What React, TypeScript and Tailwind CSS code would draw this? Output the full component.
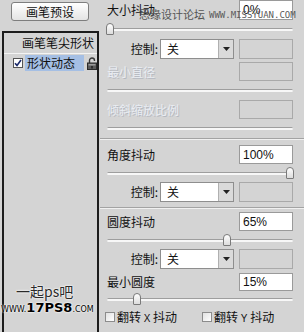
import type { ReactNode } from "react";

const cjk = "font-['Noto_Sans_CJK_SC','Noto_Sans',sans-serif]";

function ValueBox({ value, disabled }: { value?: string; disabled?: boolean }) {
  return (
    <div
      className={`flex h-full w-[54px] items-center border pl-[3px] font-['Liberation_Sans',Arial,sans-serif] text-[12px] text-[#111] ${
        disabled ? "border-[#a9a9a9] bg-[#d4d4d4]" : "border-[#9a9a9a] bg-white"
      }`}
    >
      {value}
    </div>
  );
}

function LabelRow({
  label,
  value,
  disabled,
  h,
}: {
  label: string;
  value?: string;
  disabled?: boolean;
  h: string;
}) {
  return (
    <div className={`flex ${h} items-stretch justify-between pr-[11px]`}>
      <span
        className={`flex items-center pl-[7px] text-[12px] ${
          disabled ? "text-[#e9edf3] [text-shadow:1px_1px_0_#b4b8c0]" : "text-[#111]"
        }`}
      >
        {label}
      </span>
      <ValueBox value={value} disabled={disabled} />
    </div>
  );
}

function Slider({ h, pos }: { h: string; pos?: number }) {
  return (
    <div className={`flex ${h} items-center pl-[7px] pr-[11px]`}>
      <div className="relative h-[3px] w-full rounded-[2px] border-t border-[#9e9e9e] bg-[#f7f7f7]">
        {pos !== undefined && (
          <div
            className="absolute top-[-6px] h-[12px] w-[8px] rounded-t-[4px] rounded-b-[1px] border border-[#7a7a7a] bg-gradient-to-b from-white to-[#dcdcdc]"
            style={{ left: `${-1 + pos * 180}px` }}
          />
        )}
      </div>
    </div>
  );
}

function Control() {
  return (
    <div className="flex h-[20px] items-stretch">
      <span className="flex w-[58px] items-center justify-end text-[12px] text-[#111]">控制:</span>
      <div className="ml-[2px] flex w-[74px] border border-[#8e8e8e] bg-white">
        <span className="flex flex-1 items-center pl-[6px] text-[12px] text-[#111]">关</span>
        <span className="flex w-[15px] items-center justify-center border-l border-[#b0b0b0] bg-[#dadada]">
          <svg width="7" height="4" viewBox="0 0 7 4">
            <path d="M0 0h7L3.5 4z" fill="#222" />
          </svg>
        </span>
      </div>
      <div className="ml-[5px]">
        <ValueBox disabled />
      </div>
    </div>
  );
}

function Separator() {
  return <div className="h-[2px] border-t border-b border-t-[#a3a3a3] border-b-[#f0f0f0]" />;
}

function Check({ children }: { children: ReactNode }) {
  return (
    <div className="flex items-center">
      <span className="h-[10px] w-[10px] border border-[#8c8c8c] bg-gradient-to-br from-[#e2e2e2] to-white" />
      <span className="ml-[2px] text-[12px] text-[#111]">{children}</span>
    </div>
  );
}

function Lock() {
  return (
    <svg width="10" height="13" viewBox="0 0 10 13">
      <path d="M2.5 6V3.5a2.5 2.5 0 0 1 5 0V4" fill="none" stroke="#3a3a3a" strokeWidth="1.4" />
      <rect x="0.5" y="6" width="9" height="6.5" fill="#5a5a5a" stroke="#2a2a2a" />
      <rect x="1.5" y="7" width="7" height="1.5" fill="#9a9a9a" />
      <rect x="4.3" y="9" width="1.4" height="2.5" fill="#1a1a1a" />
    </svg>
  );
}

export default function App() {
  return (
    <div className={`relative flex h-[332px] w-[304px] overflow-hidden bg-[#d4d4d4] ${cjk}`}>
      {/* left column */}
      <div className="flex w-[100px] flex-col">
        <button
          type="button"
          className="ml-[11px] mt-[2px] h-[19px] w-[78px] rounded-[3px] border border-[#7e7e7e] bg-gradient-to-b from-white to-[#e4e4e4] text-[12px] leading-none text-[#111]"
        >
          画笔预设
        </button>
        <div className="ml-[2px] mt-[10px] flex w-[97px] flex-1 flex-col border-2 border-b-0 border-[#1c1c1c]">
          <div className="flex h-[20px] items-center justify-end pr-[3px] text-[12px] text-[#111]">
            画笔笔尖形状
          </div>
          <div className="h-px bg-[#f4f4f4]" />
          <div className="mt-px flex h-[16px] items-center">
            <span className="ml-[9px] flex h-[10px] w-[10px] items-center justify-center border border-[#555] bg-white">
              <svg width="8" height="8" viewBox="0 0 8 8">
                <path d="M1 4.2l2 2.2L7 1" fill="none" stroke="#1b2a6b" strokeWidth="1.6" />
              </svg>
            </span>
            <span className="ml-[2px] flex h-full w-[59px] items-center bg-[#a5bfe4] pl-[2px] text-[12px] text-[#111]">
              形状动态
            </span>
            <span className="ml-[3px]">
              <Lock />
            </span>
          </div>
        </div>
      </div>

      {/* right column */}
      <div className="flex flex-1 flex-col">
        <LabelRow label="大小抖动" value="0%" h="h-[20px]" />
        <Slider h="h-[19px]" pos={0} />
        <Control />
        <div className="h-[3px]" />
        <LabelRow label="最小直径" disabled h="h-[19px]" />
        <Slider h="h-[19px]" />
        <LabelRow label="倾斜缩放比例" disabled h="h-[19px]" />
        <Slider h="h-[19px]" />
        <Separator />
        <div className="h-[5px]" />
        <LabelRow label="角度抖动" value="100%" h="h-[19px]" />
        <Slider h="h-[18px]" pos={1} />
        <Control />
        <div className="h-[5px]" />
        <Separator />
        <div className="h-[3px]" />
        <LabelRow label="圆度抖动" value="65%" h="h-[19px]" />
        <Slider h="h-[18px]" pos={0.65} />
        <Control />
        <div className="h-[4px]" />
        <LabelRow label="最小圆度" value="15%" h="h-[18px]" />
        <Slider h="h-[17px]" pos={0.15} />
        <div className="flex h-[18px] items-center pl-[5px]">
          <Check>
            翻转 <span className="font-['Liberation_Sans',sans-serif] text-[10px]">X</span> 抖动
          </Check>
          <div className="ml-[25px]">
            <Check>
              翻转 <span className="font-['Liberation_Sans',sans-serif] text-[10px]">Y</span> 抖动
            </Check>
          </div>
        </div>
      </div>

      {/* watermarks */}
      <div className="pointer-events-none absolute left-[139px] top-[7px] flex items-end">
        <span className="text-[11px] leading-[14px] text-[#555]">思缘设计论坛</span>
        <span className="ml-[4px] font-['DejaVu_Sans_Mono',monospace] text-[9px] leading-[12px] text-[#5a5a5a]">
          WWW.MISSYUAN.COM
        </span>
      </div>
      <div className="pointer-events-none absolute left-[1px] top-[283px] flex w-[94px] flex-col">
        <span className="pl-[15px] text-[14px] leading-[16px] text-[#2a2a2a] [text-shadow:0_0_2px_#fff,0_0_2px_#fff]">
          一起ps吧
        </span>
        <span className="mt-[2px] whitespace-nowrap font-['DejaVu_Sans',sans-serif] leading-[12px] text-black [text-shadow:0_0_2px_#fff,0_0_2px_#fff]">
          <span className="text-[8px]">WWW.</span>
          <span className="text-[13px] font-bold">17PS8</span>
          <span className="text-[8px]">.COM</span>
        </span>
      </div>
    </div>
  );
}
